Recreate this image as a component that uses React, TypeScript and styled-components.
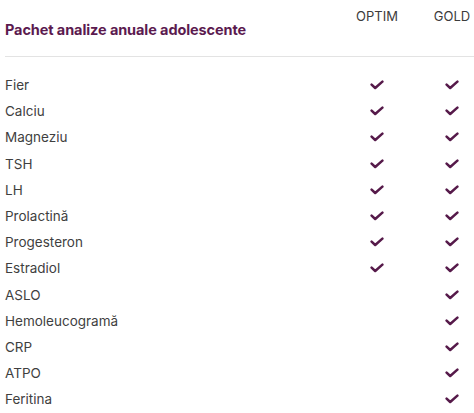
import React from "react";
import styled, { createGlobalStyle } from "styled-components";

const Global = createGlobalStyle`
  html, body { margin: 0; padding: 0; background: #ffffff; }
  body { font-family: Inter, "Noto Sans", sans-serif; }
`;

const Table = styled.div`
  width: 474px;
  padding-left: 5px;
  box-sizing: border-box;
`;

const Header = styled.div`
  display: grid;
  grid-template-columns: 1fr 44px 31px 44px;
  height: 57px;
  border-bottom: 1px solid #e3e3e3;
  box-sizing: border-box;
`;

const Title = styled.div`
  grid-column: 1;
  padding-top: 21px;
  font-size: 14.5px;
  font-weight: 700;
  color: #5b1a4f;
  letter-spacing: -0.1px;
`;

const PlanName = styled.div<{ $col: number }>`
  grid-column: ${(p) => p.$col};
  padding-top: 8px;
  text-align: center;
  font-size: 13px;
  color: #3c3c3c;
  white-space: nowrap;
  display: flex;
  justify-content: center;
`;

const Body = styled.div`
  padding-top: 15px;
`;

const Row = styled.div`
  display: grid;
  grid-template-columns: 1fr 44px 31px 44px;
  height: 26.2px;
  align-items: center;
`;

const Label = styled.div`
  font-size: 13.5px;
  color: #3f3f3f;
`;

const Cell = styled.div<{ $col: number }>`
  grid-column: ${(p) => p.$col};
  display: flex;
  justify-content: center;
  align-items: center;
`;

const Check = () => (
  <svg width="14" height="10" viewBox="0 0 14 10" aria-hidden>
    <path
      d="M1.6 4.6 L5.2 8 L12.4 1.6"
      fill="none"
      stroke="#561a4a"
      strokeWidth="2.5"
      strokeLinecap="round"
      strokeLinejoin="round"
    />
  </svg>
);

const rows: [string, boolean, boolean][] = [
  ["Fier", true, true],
  ["Calciu", true, true],
  ["Magneziu", true, true],
  ["TSH", true, true],
  ["LH", true, true],
  ["Prolactină", true, true],
  ["Progesteron", true, true],
  ["Estradiol", true, true],
  ["ASLO", false, true],
  ["Hemoleucogramă", false, true],
  ["CRP", false, true],
  ["ATPO", false, true],
  ["Feritina", false, true],
];

export default function App() {
  return (
    <>
      <Global />
      <Table>
        <Header>
          <Title>Pachet analize anuale adolescente</Title>
          <PlanName $col={2}>OPTIM</PlanName>
          <PlanName $col={4}>GOLD</PlanName>
        </Header>
        <Body>
          {rows.map(([name, optim, gold]) => (
            <Row key={name}>
              <Label>{name}</Label>
              <Cell $col={2}>{optim && <Check />}</Cell>
              <Cell $col={4}>{gold && <Check />}</Cell>
            </Row>
          ))}
        </Body>
      </Table>
    </>
  );
}
